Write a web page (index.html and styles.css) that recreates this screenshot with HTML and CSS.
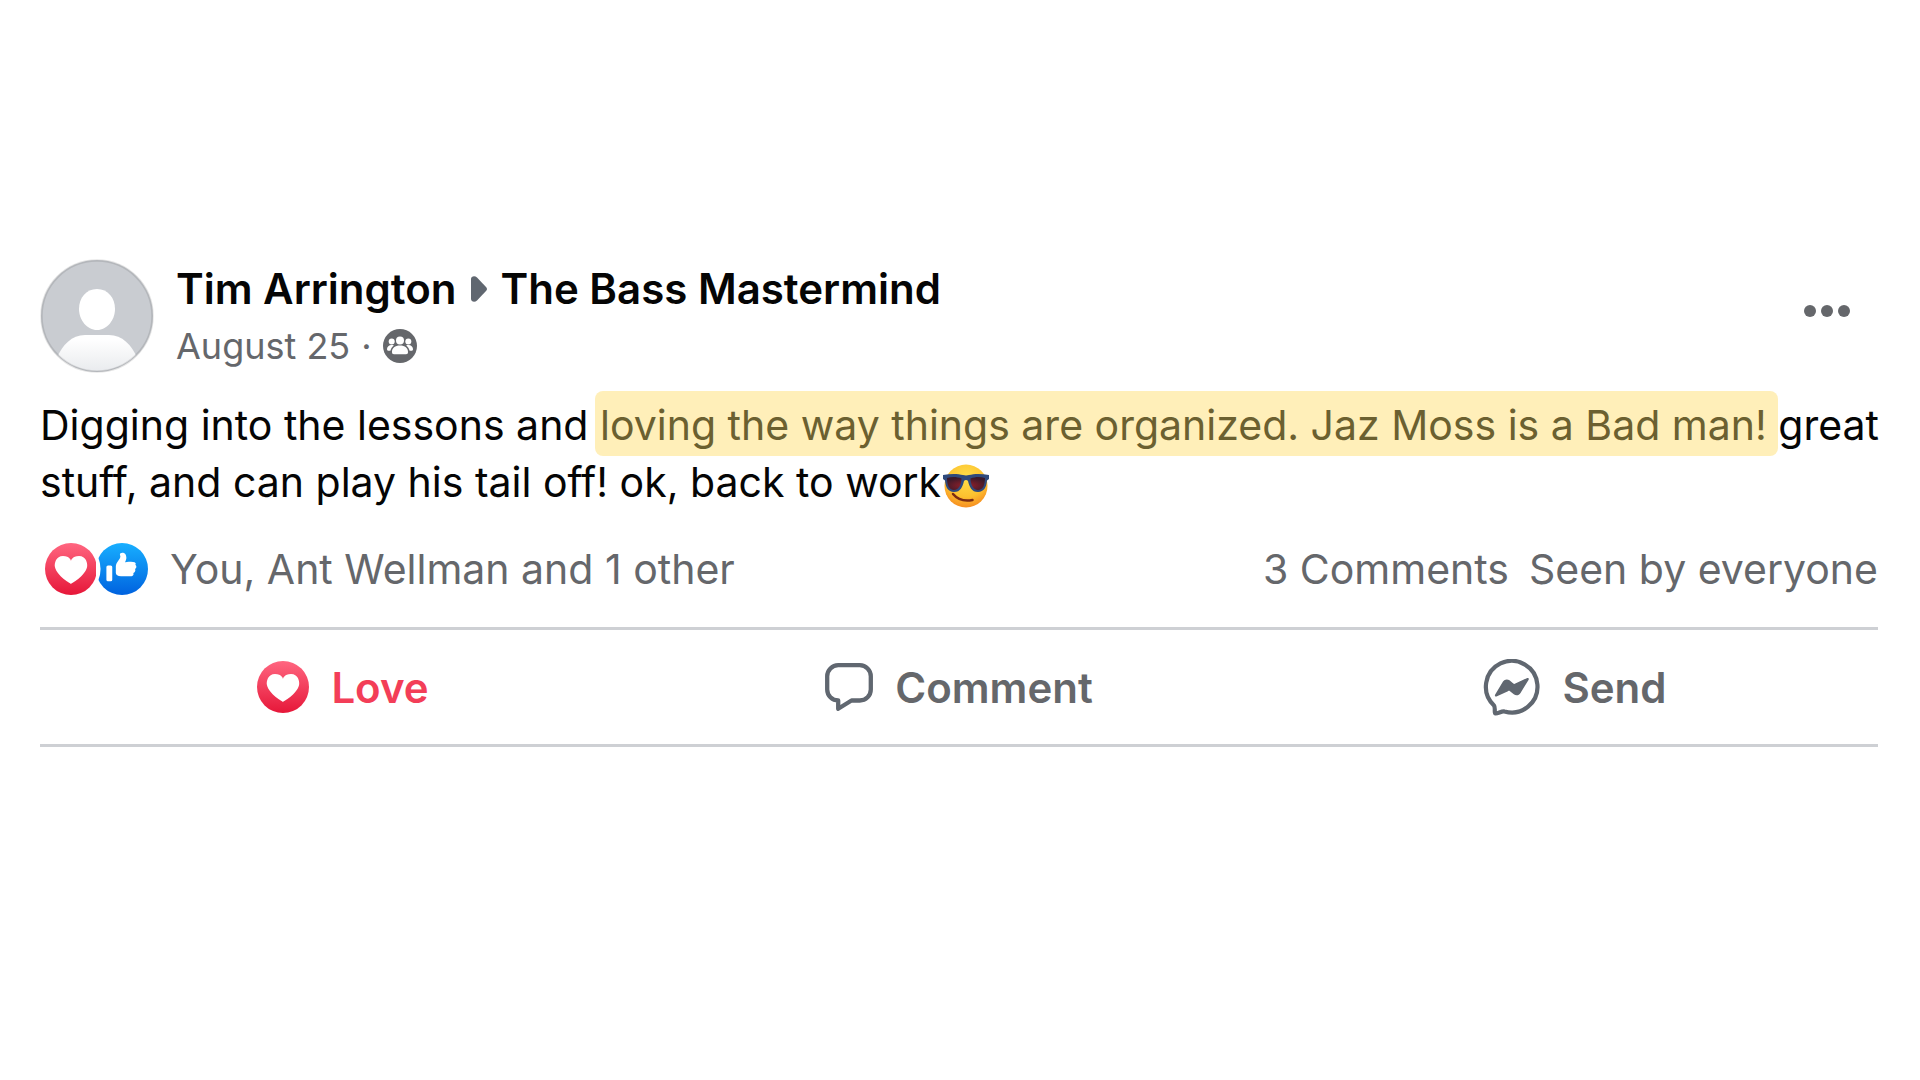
FILE: index.html
```
<!DOCTYPE html>
<html lang="en">
<head>
<meta charset="utf-8">
<meta name="viewport" content="width=device-width, initial-scale=1">
<title>The Bass Mastermind</title>
<link rel="stylesheet" href="styles.css">
</head>
<body>
<svg class="defs" width="0" height="0" aria-hidden="true">
  <defs>
    <linearGradient id="love-fill" x1="0" y1="0" x2="0" y2="1">
      <stop offset="0" stop-color="#ff6680"/><stop offset="1" stop-color="#e61739"/>
    </linearGradient>
    <linearGradient id="like-fill" x1="0" y1="0" x2="0" y2="1">
      <stop offset="0" stop-color="#18afff"/><stop offset="1" stop-color="#0062df"/>
    </linearGradient>
    <linearGradient id="person-fill" gradientUnits="userSpaceOnUse" x1="0" y1="80" x2="0" y2="114">
      <stop offset="0" stop-color="#ffffff"/><stop offset="1" stop-color="#e8eaed"/>
    </linearGradient>
    <radialGradient id="face-fill" cx=".5" cy=".3" r=".75">
      <stop offset="0" stop-color="#ffe04a"/><stop offset=".6" stop-color="#fdc12f"/><stop offset="1" stop-color="#f5841f"/>
    </radialGradient>
    <radialGradient id="lens-fill" cx=".5" cy=".65" r=".6">
      <stop offset="0" stop-color="#9a2029"/><stop offset="1" stop-color="#3b1a2a"/>
    </radialGradient>
    <clipPath id="avatar-clip"><circle cx="57" cy="57" r="55"/></clipPath>
    <symbol id="love" viewBox="0 0 16 16">
      <circle cx="8" cy="8" r="8" fill="url(#love-fill)"/>
      <path fill="#fff" d="M10.473 4C8.275 4 8 5.500 8 5.500S7.726 4 5.528 4c-2.114 0-2.730 2.222-2.472 3.410C3.736 10.300 8 12.600 8 12.600s4.265-2.300 4.945-5.190c.257-1.188-.360-3.410-2.472-3.410"/>
    </symbol>
    <symbol id="like" viewBox="0 0 16 16">
      <circle cx="8" cy="8" r="8" fill="url(#like-fill)"/>
      <circle cx="-7.700" cy="8" r="9.100" fill="#fff"/>
      <rect x="3.200" y="6.900" width="1.800" height="4.900" rx=".5" fill="#fff"/>
      <path fill="#fff" d="M12 6.700c.25.130.42.300.42.640 0 .360-.2.560-.42.680.100.170.130.340.090.530-.070.340-.350.600-.620.680.110.190.140.380.010.610-.180.290-.330.400-.980.400H7.700c-1 0-1.600-.4-1.600-1V7.200c0-1.250 1.400-2.200 1.400-3.050L7.350 3.500c0-.25.300-.5.750-.5.900 0 1.250.7 1.250 1.600 0 .4-.35 1.100-.4 1.350 0 0 .85-.150 1.800-.150 1 0 1.500.250 1.500.650 0 .1-.1.200-.25.250z"/>
    </symbol>
  </defs>
</svg>
<main class="post">
  <header class="post-head">
    <svg class="avatar" viewBox="0 0 114 114" role="img" aria-label="Profile picture">
      <circle cx="57" cy="57" r="56" fill="#c9ccd1"/>
      <g clip-path="url(#avatar-clip)">
        <path fill="#fff" d="M57 30c11 0 18 9 18 20s-8 21-18 21-18-10-18-21 7-20 18-20z"/>
        <path fill="url(#person-fill)" d="M17 114V99C22 86 32 76 45 76h24c13 0 23 10 28 23v15z"/>
      </g>
      <circle cx="57" cy="57" r="55.500" fill="none" stroke="#000" stroke-opacity=".1" stroke-width="2.500"/>
    </svg>
    <div class="byline">
      <h1 class="title">
        <a href="#">Tim Arrington</a>
        <svg class="arrow" viewBox="0 0 16 26" aria-hidden="true"><path fill="#606770" d="M0 3C0 .5 3.500-.8 6 1.500l9 9.500c1.300 1.400 1.300 2.600 0 4L6 24.500C3.500 26.800 0 25.500 0 23z"/></svg>
        <a href="#">The Bass Mastermind</a>
      </h1>
      <p class="meta"><a href="#">August 25</a><span>·</span>
        <svg class="group" viewBox="0 0 34 34" role="img" aria-label="Group members">
          <circle cx="17" cy="17" r="17" fill="#65676b"/>
          <g fill="#fff"><circle cx="17" cy="11.500" r="4"/><circle cx="8.700" cy="12.500" r="3"/><circle cx="25.300" cy="12.500" r="3"/><path d="M9 23c0-4 3-6.500 8-6.500s8 2.500 8 6.500c0 1.500-.6 2.200-2 2.200H11c-1.400 0-2-.7-2-2.200zM4 20c0-2.300 2-4 4.500-4 1 0 1.700.1 2.300.4-2 1.500-3 3.300-3.400 5.400H5.500C4.500 21.800 4 21 4 20zM30 20c0-2.300-2-4-4.500-4-1 0-1.700.1-2.300.4 2 1.500 3 3.300 3.400 5.400h1.900c1 0 1.500-.8 1.500-1.800z"/></g>
        </svg>
      </p>
    </div>
    <button class="more" type="button" aria-label="More options">
      <svg viewBox="0 0 46 12" aria-hidden="true"><g fill="#65676b"><circle cx="6" cy="6" r="6"/><circle cx="23" cy="6" r="6"/><circle cx="40" cy="6" r="6"/></g></svg>
    </button>
  </header>
  <p class="body-text">Digging into the lessons and <mark>loving the way things are organized. Jaz Moss is a Bad man! </mark>great stuff, and can play his tail off! ok, back to work<svg class="emoji" viewBox="0 0 46 46" role="img" aria-label="Smiling face with sunglasses">
    <circle cx="23" cy="23" r="21.500" fill="url(#face-fill)"/>
    <path d="M10 31c5 6 12 7.500 19.500 6" fill="none" stroke="#7c2b12" stroke-width="2.500" stroke-linecap="round"/>
    <path fill="#2f4a7c" d="M0 12c7-1.500 15-1.500 20 0 2 .6 4 .6 6 0 5-1.500 13-1.500 20 0v4l-2 1.500C43.500 24 41 29 35 29c-6.500 0-8.500-5-10-11-.8-1.500-3.200-1.500-4 0-1.500 6-3.500 11-10 11C5 29 2.500 24 2 17.500L0 16z"/>
    <path fill="url(#lens-fill)" d="M4 15c5-1.500 10-1.200 14.500.5C18.500 21 16 27 11 27S4 22 4 15zM42 15c-5-1.500-10-1.200-14.500.5C27.500 21 30 27 35 27s7-5 7-12z"/>
  </svg></p>
  <section class="stats">
    <div class="reactions">
      <svg class="react" aria-hidden="true"><use href="#love"/></svg><svg class="react like" aria-hidden="true"><use href="#like"/></svg>
      <a class="names" href="#">You, Ant Wellman and 1 other</a>
    </div>
    <div class="counts"><a href="#">3 Comments</a><a href="#">Seen by everyone</a></div>
  </section>
  <div class="actions">
    <button class="action loved" type="button"><svg class="love-icon" aria-hidden="true"><use href="#love"/></svg>Love</button>
    <button class="action" type="button"><svg class="comment-icon" viewBox="0 0 48 48" aria-hidden="true"><path fill="none" stroke="#606770" stroke-width="4.300" stroke-linejoin="round" d="M13.200 2.200H34.800A11 11 0 0 1 45.800 13.200V26.500A11 11 0 0 1 34.800 37.500H26.500L13.200 45.800V37.500A11 11 0 0 1 2.200 26.500V13.200A11 11 0 0 1 13.200 2.200z"/></svg>Comment</button>
    <button class="action" type="button"><svg class="send-icon" viewBox="0 0 57 57" aria-hidden="true"><path fill="none" stroke="#606770" stroke-width="4.200" stroke-linejoin="round" d="M21.500 52.500C19 51.700 14.500 55 12.500 54.500 10.800 54 12.800 49 11 46.500A25.800 25.800 0 1 1 21.500 52.500z"/><path fill="#606770" d="M12.200 35.500L20 22.500c1.500-2.400 4.500-2.700 6.500-1.200l3.800 3.200c.7.500 1.300.5 2 0l11.500-5.300c1.500-.7 2.500.3 1.700 1.800L37.500 34c-1.500 2.500-4.500 3-6.700 1.300L27 32.200c-.7-.5-1.300-.5-2 0l-11 5c-1.500.8-2.700-.2-1.800-1.700z"/></svg>Send</button>
  </div>
</main>
</body>
</html>
```

FILE: styles.css
```
* { box-sizing: border-box; }
body { margin: 0; background: #fff; color: #050505; font-family: Inter, "Liberation Sans", sans-serif; }
.defs { position: absolute; }
a { color: inherit; text-decoration: none; }
button { border: 0; padding: 0; background: none; font: inherit; color: inherit; cursor: pointer; }
.post { padding: 259px 42px 0 40px; }
.post-head { display: flex; align-items: flex-start; }
.avatar { width: 114px; height: 114px; margin-right: 22px; }
.byline { flex: 1; padding-top: 2px; }
.title { display: flex; align-items: center; gap: 14px; margin: 0; font-size: 42px; line-height: 56px; font-weight: 600; }
.arrow { width: 16px; height: 26px; }
.meta { display: flex; align-items: center; gap: 11px; margin: 0; font-size: 36px; line-height: 58px; color: #65676b; }
.group { width: 34px; height: 34px; }
.more { padding: 46px 28px 0; }
.more svg { display: block; width: 46px; height: 12px; }
.body-text { margin: 22px -8px 0 0; font-size: 41px; line-height: 57px; }
mark { background: #ffefb9; color: #6b6030; border-radius: 8px; padding: 9px 0 6px 5px; margin-left: -5px; }
.emoji { width: 46px; height: 46px; margin-left: 2px; vertical-align: -12px; }
.stats { display: flex; justify-content: space-between; font-size: 41px; line-height: 56px; margin-top: 30px; color: #65676b; }
.reactions { display: flex; align-items: center; padding-left: 5px; }
.react { width: 52px; height: 52px; }
.like { margin-left: -1px; }
.names { margin-left: 22px; }
.counts { display: flex; gap: 20px; }
.actions { display: grid; grid-template-columns: repeat(3, 1fr); column-gap: 10px; border-block: 3px solid #ced0d4; margin-top: 30px; }
.action { display: flex; align-items: center; justify-content: center; gap: 22px; height: 114px; font-size: 42px; font-weight: 600; color: #65676b; }
.loved { color: #f33e58; }
.love-icon { width: 52px; height: 52px; }
.comment-icon { width: 48px; height: 48px; }
.send-icon { width: 57px; height: 57px; }
```
